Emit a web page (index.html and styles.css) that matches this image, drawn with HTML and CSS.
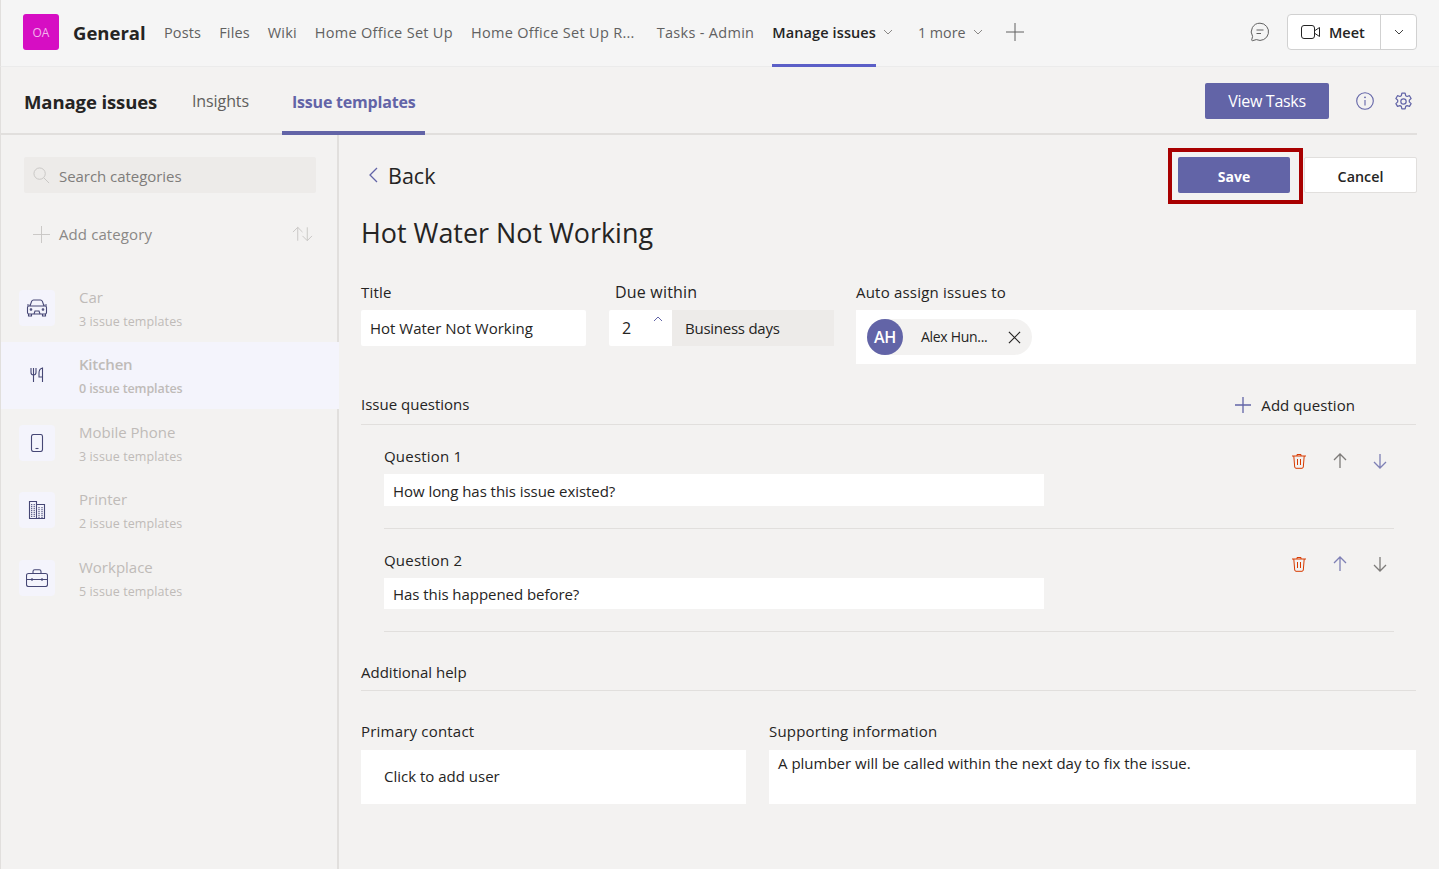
FILE: index.html
```html
<!DOCTYPE html>
<html lang="en">
<head>
<meta charset="UTF-8" />
<title>Manage issues</title>
<link rel="stylesheet" href="styles.css">
</head>
<body>
  <header class="topbar">
    <div class="team-logo">OA</div>
    <div class="team-name">General</div>
    <nav class="top-tabs">
      <a class="short-tab">Posts</a>
      <a class="short-tab">Files</a>
      <a class="short-tab">Wiki</a>
      <a>Home Office Set Up</a>
      <a>Home Office Set Up R...</a>
      <a class="tasks-tab">Tasks - Admin</a>
      <a class="active">Manage issues</a>
    </nav>
    <svg class="chev first" viewBox="0 0 10 6"><path d="M1 1l4 4 4-4" /></svg>
    <span class="more">1 more</span>
    <svg class="chev" viewBox="0 0 10 6"><path d="M1 1l4 4 4-4" /></svg>
    <svg class="top-plus" viewBox="0 0 18 18"><path d="M9 0v18M0 9h18" /></svg>
    <svg class="chat-icon" viewBox="0 0 20 20"><path d="M10 1.2a8.6 8.6 0 1 1-3.700 16.400l-3.800 1.100c-.5.1-.9-.3-.8-.8l.9-3.500A8.600 8.600 0 0 1 10 1.200z" /><path d="M6.500 8h7M6.500 11.500h4.500" /></svg>
    <div class="meet">
      <div class="meet-main">
        <svg viewBox="0 0 20 14"><rect x="0.500" y="0.500" width="13" height="13" rx="2.500" /><path d="M14 5.500l4.500-3v9l-4.500-3" /></svg>
        Meet
      </div>
      <div class="meet-drop"><svg class="chev dark" viewBox="0 0 10 6"><path d="M1 1l4 4 4-4" /></svg></div>
    </div>
  </header>

  <div class="subbar">
    <h1>Manage issues</h1>
    <a class="sub-tab">Insights</a>
    <a class="sub-tab active">Issue templates</a>
    <button class="btn-primary view-tasks">View Tasks</button>
    <svg class="sub-icon" viewBox="0 0 18 18"><circle cx="9" cy="9" r="8.300" /><path d="M9 8v5.500" /><circle class="dot" cx="9" cy="5.300" r="0.900" /></svg>
    <svg class="sub-icon gear" viewBox="0 0 20 20"><path d="M8.300 1.300h3.400l.6 2.600 1.500.8 2.500-.8 1.700 2.900-1.900 1.800v1.800l1.900 1.800-1.700 2.900-2.500-.8-1.500.8-.6 2.600H8.300l-.6-2.600-1.500-.8-2.500.8-1.700-2.900 1.900-1.800V8.600L2 6.800l1.700-2.900 2.500.8 1.500-.8z" /><circle cx="10" cy="10" r="2.800" /></svg>
  </div>

  <div class="layout">
    <aside class="sidebar">
      <div class="search">
        <svg viewBox="0 0 18 18"><circle cx="7" cy="7" r="6" /><path d="M11.500 11.500l5.500 5.500" /></svg>
        <span>Search categories</span>
      </div>
      <div class="add-cat">
        <svg class="plus" viewBox="0 0 18 18"><path d="M9 0v18M0 9h18" /></svg>
        <span>Add category</span>
        <svg class="sort" viewBox="0 0 22 16"><path d="M6 15V1M1 6l5-5 5 5M16 1v14M11 10l5 5 5-5" /></svg>
      </div>

      <ul class="cats">
        <li class="cat">
          <div class="cat-icon">
            <svg viewBox="0 0 22 18"><path d="M4 7l1.600-4.600C5.900 1.600 6.500 1 7.500 1h7c1 0 1.600.6 1.900 1.400L18 7" /><path d="M1 6h2.500M18.500 6H21" /><rect x="1.500" y="7" width="19" height="8" rx="1.500" /><path d="M2.500 15v2h3v-2M16.500 15v2h3v-2M8 15l1-3h4l1 3" /><circle cx="5" cy="10.500" r="0.800" /><circle cx="17" cy="10.500" r="0.800" /></svg>
          </div>
          <div class="cat-text"><div class="cat-name">Car</div><div class="cat-sub">3 issue templates</div></div>
        </li>
        <li class="cat selected">
          <div class="cat-icon">
            <svg viewBox="-1 -1 16 18"><path d="M1 1v4.500c0 1.500 1 2.500 2.500 2.500S6 7 6 5.500V1M3.500 1v14M12.500 15V1C10.500 1.500 9 3.500 9 6v4h3.500" /></svg>
          </div>
          <div class="cat-text"><div class="cat-name">Kitchen</div><div class="cat-sub">0 issue templates</div></div>
        </li>
        <li class="cat">
          <div class="cat-icon">
            <svg viewBox="0 0 12 18"><rect x="0.500" y="0.500" width="11" height="17" rx="2" /><path d="M4.500 14.500h3" /></svg>
          </div>
          <div class="cat-text"><div class="cat-name">Mobile Phone</div><div class="cat-sub">3 issue templates</div></div>
        </li>
        <li class="cat">
          <div class="cat-icon">
            <svg viewBox="0 0 16 18"><path d="M.5 17.500V.5h7v17M7.500 3.500h8v14M0 17.500h16" /><path class="windows" d="M2.700 3v13M5.200 3v13M10 6v11M13 6v11" /></svg>
          </div>
          <div class="cat-text"><div class="cat-name">Printer</div><div class="cat-sub">2 issue templates</div></div>
        </li>
        <li class="cat">
          <div class="cat-icon">
            <svg viewBox="0 0 22 18"><rect x="0.500" y="4.500" width="21" height="13" rx="2" /><path d="M7 4.500V2.500c0-1 .7-1.700 1.700-1.700h4.600c1 0 1.700.7 1.700 1.700v2M.5 10.500h21M6 9v3M16 9v3" /></svg>
          </div>
          <div class="cat-text"><div class="cat-name">Workplace</div><div class="cat-sub">5 issue templates</div></div>
        </li>
      </ul>
    </aside>

    <main class="content">
      <div class="back-row">
        <svg class="back-chev" viewBox="0 0 9 16"><path d="M8 1L1 8l7 7" /></svg>
        <span class="back">Back</span>
        <div class="save-wrap">
          <button class="btn-primary save">Save</button>
        </div>
        <button class="cancel">Cancel</button>
      </div>

      <h2>Hot Water Not Working</h2>

      <div class="top-fields">
        <div class="f-title">
          <label>Title</label>
          <div class="field">Hot Water Not Working</div>
        </div>
        <div class="f-due">
          <label>Due within</label>
          <div class="due-row">
            <div class="due-num">2<svg viewBox="0 0 10 6"><path d="M1 5l4-4 4 4" /></svg></div>
            <div class="due-unit">Business days</div>
          </div>
        </div>
        <div class="f-assign">
          <label>Auto assign issues to</label>
          <div class="assign-box">
            <div class="chip">
              <div class="avatar">AH</div>
              <span>Alex Hun...</span>
              <svg viewBox="0 0 14 14"><path d="M1 1l12 12M13 1L1 13" /></svg>
            </div>
          </div>
        </div>
      </div>

      <div class="section-head issues-head">
        <span>Issue questions</span>
        <div class="add-q">
          <svg viewBox="0 0 16 16"><path d="M8 0v16M0 8h16" /></svg>
          Add question
        </div>
      </div>

      <div class="question">
        <div class="q-head">
          <label>Question 1</label>
          <div class="q-actions">
            <svg class="trash" viewBox="0 0 14 16"><path d="M0 3h14M5 3V1.500h4V3M1.800 3l.9 11c.1.8.6 1.300 1.300 1.300h6c.7 0 1.200-.5 1.300-1.300l.9-11M5.500 6v6M8.500 6v6" /></svg>
            <svg class="arrow grey" viewBox="0 0 14 16"><path d="M7 15V1M1 7l6-6 6 6" /></svg>
            <svg class="arrow" viewBox="0 0 14 16"><path d="M7 1v14M1 9l6 6 6-6" /></svg>
          </div>
        </div>
        <div class="field q-input">How long has this issue existed?</div>
      </div>
      <div class="question second">
        <div class="q-head">
          <label>Question 2</label>
          <div class="q-actions">
            <svg class="trash" viewBox="0 0 14 16"><path d="M0 3h14M5 3V1.500h4V3M1.800 3l.9 11c.1.8.6 1.300 1.300 1.300h6c.7 0 1.200-.5 1.300-1.300l.9-11M5.500 6v6M8.500 6v6" /></svg>
            <svg class="arrow" viewBox="0 0 14 16"><path d="M7 15V1M1 7l6-6 6 6" /></svg>
            <svg class="arrow grey" viewBox="0 0 14 16"><path d="M7 1v14M1 9l6 6 6-6" /></svg>
          </div>
        </div>
        <div class="field q-input short">Has this happened before?</div>
      </div>

      <div class="section-head help-head"><span>Additional help</span></div>

      <div class="bottom-fields">
        <div>
          <label>Primary contact</label>
          <div class="field tall add-user">Click to add user</div>
        </div>
        <div>
          <label>Supporting information</label>
          <div class="field tall info">A plumber will be called within the next day to fix the issue.</div>
        </div>
      </div>
    </main>
  </div>
</body>
</html>
```

FILE: styles.css
```css
/* Reset some styles */
*, *::before, *::after {
  box-sizing: border-box;
}
html, body {
  height: 100%;
}
body {
  margin: 0;
  font-family: "Open Sans", "Noto Sans", sans-serif;
  font-size: 14px;
  color: #252423;
  background: #f3f2f1;
  overflow: hidden;
}
svg {
  fill: none;
  stroke: currentColor;
  stroke-width: 1;
  display: block;
  flex: none;
}
h1, h2, ul {
  margin: 0;
  padding: 0;
}
button {
  font-family: inherit;
  cursor: pointer;
}

/* top bar */
.topbar {
  height: 67px;
  display: flex;
  align-items: center;
  padding: 0 22px 2px 23px;
  background: #f5f5f5;
  border-bottom: 1px solid #ebebeb;
  border-left: 1px solid #e1dfdd;
}
.team-logo {
  width: 36px;
  height: 36px;
  margin-left: -1px;
  border-radius: 3px;
  background: #d60ec3;
  color: #f3b5ec;
  font-size: 12px;
  display: flex;
  align-items: center;
  justify-content: center;
}
.team-name {
  margin-left: 14px;
  font-size: 18.500px;
  font-weight: 700;
  color: #252423;
  width: 73px;
  white-space: nowrap;
}
.top-tabs {
  display: flex;
  align-self: stretch;
  margin-left: 18px;
  margin-bottom: -3px;
  gap: 18px;
}
.top-tabs a {
  display: flex;
  align-items: center;
  font-size: 14.500px;
  letter-spacing: 0.3px;
  color: #616161;
  padding-top: 1px;
  border-bottom: 3px solid transparent;
  white-space: nowrap;
}
.top-tabs a.short-tab {
  letter-spacing: 0.15px;
}
.top-tabs a.tasks-tab {
  margin-left: 4px;
}
.top-tabs a.active {
  color: #242424;
  font-weight: 600;
  letter-spacing: 0.1px;
  border-bottom-color: #5b5fc7;
}
.chev {
  width: 10px;
  height: 6px;
  color: #8a8886;
}
.chev.first {
  margin-left: 7px;
}
.chev.dark {
  color: #424242;
}
.more {
  margin-left: 25px;
  margin-right: 7px;
  font-size: 14.300px;
  color: #616161;
}
.top-plus {
  width: 18px;
  height: 18px;
  margin-left: 23px;
  color: #616161;
}
.chat-icon {
  width: 20px;
  height: 20px;
  margin-left: auto;
  color: #616161;
}
.meet {
  display: flex;
  margin-left: 17px;
  width: 130px;
  height: 36px;
  background: #fff;
  border: 1px solid #d1d1d1;
  border-radius: 4px;
}
.meet-main {
  width: 93px;
  display: flex;
  align-items: center;
  gap: 8px;
  padding-left: 13px;
  font-weight: 600;
  font-size: 14.500px;
  color: #242424;
  border-right: 1px solid #d1d1d1;
}
.meet-main svg {
  width: 20px;
  height: 14px;
}
.meet-drop {
  flex: 1;
  display: flex;
  align-items: center;
  justify-content: center;
}

/* second bar */
.subbar {
  height: 68px;
  display: flex;
  align-items: center;
  padding: 2px 4px 0 24px;
  border-bottom: 2px solid #e1dfdd;
  margin-right: 22px;
  border-left: 1px solid #e1dfdd;
}
.subbar h1 {
  font-size: 18.500px;
  font-weight: 700;
  letter-spacing: -0.1px;
  margin-left: -1px;
  width: 133px;
  white-space: nowrap;
}
.sub-tab {
  align-self: stretch;
  display: flex;
  align-items: center;
  margin-left: 35px;
  font-size: 16px;
  letter-spacing: -0.1px;
  color: #605e5c;
  white-space: nowrap;
}
.sub-tab.active {
  margin-left: 33px;
  margin-bottom: -2px;
  padding: 3px 10px 0;
  font-weight: 700;
  color: #6264a7;
  border-bottom: 4px solid #6264a7;
  letter-spacing: -0.2px;
}
.btn-primary {
  border: 0;
  border-radius: 2px;
  background: #6264a7;
  color: #fff;
}
.view-tasks {
  margin-left: auto;
  width: 124px;
  height: 36px;
  font-size: 16px;
  letter-spacing: -0.3px;
}
.sub-icon {
  width: 18px;
  height: 18px;
  margin-left: 27px;
  color: #6264a7;
  stroke-width: 1.100;
}
.sub-icon .dot {
  fill: #6264a7;
  stroke: none;
}
.sub-icon.gear {
  width: 19px;
  height: 19px;
  margin-left: 20px;
  stroke-linejoin: round;
  stroke-width: 1.300;
}

/* page body */
.layout {
  display: flex;
  height: calc(100% - 135px);
}
.sidebar {
  width: 339px;
  padding-top: 22px;
  border-left: 1px solid #e1dfdd;
  border-right: 2px solid #e1dfdd;
}
.search {
  display: flex;
  align-items: center;
  height: 36px;
  margin: 0 21px 0 23px;
  padding: 1px 0 0 9px;
  background: #edebe9;
  border-radius: 2px;
  color: #7f7d7b;
  font-size: 15px;
  letter-spacing: -0.05px;
}
.search svg {
  width: 17px;
  height: 17px;
  margin-right: 9px;
  color: #c8c6c4;
}
.add-cat {
  display: flex;
  align-items: center;
  height: 36px;
  margin: 23px 24px 0 32px;
  color: #8a8886;
  font-size: 15px;
  letter-spacing: 0.1px;
}
.add-cat .plus {
  width: 17px;
  height: 17px;
  margin-right: 9px;
  color: #c8c6c4;
}
.add-cat .sort {
  width: 21px;
  height: 16px;
  margin-left: auto;
  color: #c8c6c4;
}
.cats {
  list-style: none;
  margin-top: 22px;
}
.cat {
  height: 67.500px;
  display: flex;
  align-items: center;
  gap: 24px;
  padding-left: 18px;
}
.cat.selected {
  margin-right: -2px;
  background: #f4f4fc;
}
.cat-icon {
  width: 36px;
  height: 36px;
  border-radius: 4px;
  background: #f4f4fc;
  display: flex;
  align-items: center;
  justify-content: center;
  color: #464775;
}
.cat-icon svg {
  width: 22px;
  height: 18px;
  stroke-width: 1.100;
}
.cat-icon .windows {
  stroke-dasharray: 1.200 0.800;
}
.cat-text {
  padding-top: 2px;
}
.cat-name {
  font-size: 15px;
  line-height: 20px;
  color: #bfbbb8;
  margin-bottom: 6px;
}
.cat-sub {
  font-size: 12.500px;
  letter-spacing: 0.1px;
  line-height: 18px;
  color: #bfbbb8;
}
.selected .cat-name, .selected .cat-sub {
  font-weight: 600;
  letter-spacing: -0.1px;
}
.selected .cat-name {
  letter-spacing: -0.2px;
}

/* form */
.content {
  flex: 1;
  padding: 22px 23px 0 22px;
}
.back-row {
  display: flex;
  align-items: center;
  height: 36px;
}
.back-chev {
  width: 9px;
  height: 16px;
  margin-left: 8px;
  color: #6264a7;
  stroke-width: 1.300;
}
.back {
  margin-left: 10px;
  font-size: 21.500px;
}
.save-wrap {
  position: relative;
  margin-left: auto;
}
.save-wrap::after {
  content: "";
  position: absolute;
  left: -10px;
  right: -13px;
  top: -9px;
  bottom: -11px;
  border: 4px solid #a80000;
}
.save {
  display: block;
  width: 112px;
  height: 36px;
  padding-top: 3px;
  font-size: 14px;
  font-weight: 700;
}
.cancel {
  margin-left: 14px;
  margin-right: -1px;
  width: 113px;
  height: 36px;
  padding-top: 3px;
  background: #fff;
  border: 1px solid #e1dfdd;
  border-radius: 2px;
  color: #252423;
  font-size: 14.300px;
  font-weight: 600;
}
h2 {
  margin-top: 20px;
  font-size: 26.900px;
  font-weight: 500;
  line-height: 40px;
}
label {
  display: block;
  height: 20px;
  line-height: 20px;
  font-size: 15px;
  font-weight: 500;
  letter-spacing: 0.2px;
  white-space: nowrap;
}
.field {
  background: #fff;
  font-size: 15px;
  white-space: nowrap;
}
.top-fields {
  display: flex;
  margin-top: 29px;
}
.top-fields label {
  margin-bottom: 8px;
}
.f-title {
  width: 225px;
}
.f-title .field {
  height: 36px;
  line-height: 36px;
  padding-left: 9px;
  border-radius: 2px;
}
.f-due {
  width: 225px;
  margin-left: 23px;
}
.f-due label {
  margin-left: 6px;
  font-size: 16px;
}
.due-row {
  display: flex;
  height: 36px;
}
.due-num {
  position: relative;
  width: 63px;
  background: #fff;
  padding-left: 13px;
  line-height: 36px;
  font-size: 16px;
  border-radius: 2px 0 0 2px;
}
.due-num svg {
  position: absolute;
  top: 6px;
  right: 9px;
  width: 10px;
  height: 6px;
  color: #6264a7;
}
.due-unit {
  width: 162px;
  background: #edebe9;
  padding-left: 13px;
  line-height: 37px;
  font-size: 15px;
  letter-spacing: -0.25px;
}
.f-assign {
  flex: 1;
  margin-left: 22px;
}
.f-assign label {
  line-height: 21px;
}
.assign-box {
  height: 54px;
  background: #fff;
  padding: 9px 0 0 11px;
}
.chip {
  display: flex;
  align-items: center;
  width: 165px;
  height: 36px;
  background: #f3f2f1;
  border-radius: 18px;
  font-size: 14px;
  letter-spacing: -0.3px;
}
.chip span {
  margin-left: 18px;
  padding-bottom: 2px;
}
.chip svg {
  width: 13px;
  height: 13px;
  margin-left: auto;
  margin-right: 11px;
  color: #252423;
  stroke-width: 1.300;
}
.avatar {
  width: 36px;
  height: 36px;
  border-radius: 50%;
  background: #6264a7;
  color: #fff;
  font-size: 16px;
  font-weight: 600;
  text-align: center;
  line-height: 36px;
}
.section-head {
  display: flex;
  align-items: center;
  justify-content: space-between;
  height: 41px;
  border-bottom: 1px solid #e1dfdd;
  font-size: 15px;
  font-weight: 500;
}
.issues-head {
  margin-top: 20px;
}
.add-q {
  display: flex;
  align-items: center;
  gap: 10px;
  margin-right: 61px;
  font-weight: 400;
  letter-spacing: 0.05px;
  padding-top: 2px;
}
.add-q svg {
  width: 16px;
  height: 16px;
  color: #6264a7;
  stroke-width: 1.300;
}
.question {
  margin: 0 22px 0 23px;
  padding: 21px 0 22px;
  border-bottom: 1px solid #e1dfdd;
}
.q-head {
  display: flex;
  justify-content: space-between;
  height: 20px;
  margin-bottom: 8px;
}
.q-actions {
  display: flex;
  gap: 26px;
  margin-top: 7px;
  margin-right: 7px;
  height: 16px;
}
.second .q-actions {
  margin-top: 6px;
}
.q-actions svg {
  width: 14px;
  height: 16px;
}
.trash {
  margin-right: 1px;
  color: #d83b01;
}
.arrow {
  color: #6264a7;
  stroke-width: 1.300;
  opacity: 0.8;
}
.arrow.grey {
  color: #605e5c;
}
.q-input {
  width: 660px;
  height: 32px;
  line-height: 35px;
  padding-left: 9px;
  letter-spacing: -0.05px;
}
.q-input.short {
  height: 31px;
  line-height: 33px;
}
.help-head {
  margin-top: 20px;
  height: 39px;
  padding-top: 2px;
}
.bottom-fields {
  display: grid;
  grid-template-columns: 385px 1fr;
  column-gap: 23px;
  margin-top: 30px;
}
.bottom-fields label {
  margin-bottom: 9px;
}
.tall {
  height: 54px;
}
.add-user {
  padding-left: 23px;
  line-height: 52px;
}
.info {
  padding: 3px 0 0 9px;
  line-height: 20px;
}
```
